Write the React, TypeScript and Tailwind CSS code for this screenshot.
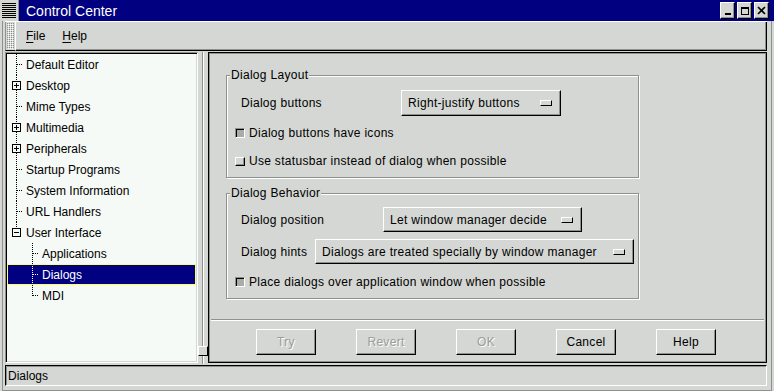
import React from 'react';

type Row = {
  label: string;
  kind: 'leaf' | 'plus' | 'minus';
  depth: 0 | 1;
  last?: boolean;
  selected?: boolean;
};

const rows: Row[] = [
  { label: 'Default Editor', kind: 'leaf', depth: 0 },
  { label: 'Desktop', kind: 'plus', depth: 0 },
  { label: 'Mime Types', kind: 'leaf', depth: 0 },
  { label: 'Multimedia', kind: 'plus', depth: 0 },
  { label: 'Peripherals', kind: 'plus', depth: 0 },
  { label: 'Startup Programs', kind: 'leaf', depth: 0 },
  { label: 'System Information', kind: 'leaf', depth: 0 },
  { label: 'URL Handlers', kind: 'leaf', depth: 0 },
  { label: 'User Interface', kind: 'minus', depth: 0, last: true },
  { label: 'Applications', kind: 'leaf', depth: 1 },
  { label: 'Dialogs', kind: 'leaf', depth: 1, selected: true },
  { label: 'MDI', kind: 'leaf', depth: 1, last: true },
];

function TreeGutter({ row }: { row: Row }) {
  const stroke = row.selected ? '#ffffff' : '#000000';
  const w = row.depth === 0 ? 19 : 35;
  const x = row.depth === 0 ? 9.5 : 25.5;
  if (row.kind === 'leaf') {
    return (
      <svg width={w} height={21} className="shrink-0" shapeRendering="crispEdges">
        <line x1={x} y1={0} x2={x} y2={row.last ? 11 : 21} stroke={stroke} strokeDasharray="1 1" />
        <line x1={x + 0.5} y1={10.5} x2={x + 5.5} y2={10.5} stroke={stroke} strokeDasharray="1 1" />
      </svg>
    );
  }
  return (
    <svg width={w} height={21} className="shrink-0" shapeRendering="crispEdges">
      <line x1={x} y1={0} x2={x} y2={6} stroke={stroke} strokeDasharray="1 1" />
      {!row.last && <line x1={x} y1={15} x2={x} y2={21} stroke={stroke} strokeDasharray="1 1" />}
      <rect x={x - 4} y={6.5} width={8} height={8} fill="#f6faf6" stroke="#000" />
      <line x1={x - 2.5} y1={10.5} x2={x + 2.5} y2={10.5} stroke="#000" />
      {row.kind === 'plus' && <line x1={x} y1={8} x2={x} y2={13} stroke="#000" />}
    </svg>
  );
}

function OptionMenu({ label, className }: { label: string; className: string }) {
  return (
    <div
      className={`flex items-center justify-between pl-[6px] pr-[8px] border border-t-white border-l-white border-r-black border-b-black shadow-[inset_-1px_-1px_0_#8e918d] ${className}`}
    >
      <span>{label}</span>
      <span className="w-[12px] h-[6px] border border-t-white border-l-white border-r-black border-b-black" />
    </div>
  );
}

function Check({ on, label, className }: { on: boolean; label: string; className: string }) {
  return (
    <div className={`flex items-center h-[16px] pl-[8px] ${className}`}>
      {on ? (
        <span className="w-[10px] h-[10px] border border-t-[#8e918d] border-l-[#8e918d] border-r-white border-b-white bg-[#a9aca8] shadow-[inset_1px_1px_0_#000]" />
      ) : (
        <span className="w-[10px] h-[9px] border border-t-white border-l-white border-r-black border-b-black shadow-[inset_-1px_-1px_0_#8e918d]" />
      )}
      <span className="ml-[4px]">{label}</span>
    </div>
  );
}

function PushButton({ label, disabled }: { label: string; disabled?: boolean }) {
  return (
    <div className="w-[60px] h-[26px] flex items-center justify-center border border-t-white border-l-white border-r-black border-b-black shadow-[inset_-1px_-1px_0_#8e918d]">
      <span className={disabled ? 'text-[#9a9d99] [text-shadow:1px_1px_0_#ffffff]' : ''}>{label}</span>
    </div>
  );
}

function TitleButton({ kind }: { kind: 'min' | 'max' | 'close' }) {
  return (
    <div className="w-[15px] h-[17px] border border-t-white border-l-white border-r-black border-b-black bg-[#d4d7d3] shadow-[inset_-1px_-1px_0_#8e918d]">
      <svg width={13} height={15} shapeRendering="crispEdges">
        {kind === 'min' && <rect x={4} y={10} width={6} height={2} fill="#000" />}
        {kind === 'max' && (
          <>
            <rect x={3.5} y={4.5} width={7} height={7} fill="none" stroke="#000" />
            <rect x={3} y={4} width={8} height={2} fill="#000" />
          </>
        )}
        {kind === 'close' && (
          <path d="M3 4 L10 11 M10 4 L3 11" stroke="#000" strokeWidth={1.6} shapeRendering="auto" />
        )}
      </svg>
    </div>
  );
}

export default function App() {
  return (
    <div className="w-[774px] h-[391px] bg-[#d4d7d3] flex flex-col overflow-hidden text-[12px] leading-[14px] text-black font-['Liberation_Sans',Arial,sans-serif]">
      {/* title bar */}
      <div className="h-[21px] flex items-stretch bg-[#000080] shrink-0">
        <div className="w-[19px] bg-[#d4d7d3] border-r border-[#8e918d]">
          <svg width={18} height={21} shapeRendering="crispEdges">
            {[3, 5, 7, 9, 11, 13, 15, 17].map((y) => (
              <line key={y} x1={2} y1={y + 0.5} x2={16} y2={y + 0.5} stroke="#000" />
            ))}
          </svg>
        </div>
        <div className="flex-1 pl-[7px] flex items-center text-white text-[14px] leading-[16px]">Control Center</div>
        <div className="flex items-start gap-[2px] pt-[2px] pr-[5px]">
          <TitleButton kind="min" />
          <TitleButton kind="max" />
          <TitleButton kind="close" />
        </div>
      </div>

      {/* client */}
      <div className="flex-1 flex flex-col ml-[2px] mr-[2px] pl-[2px] pr-[4px] pb-[3px] border-l border-r border-b border-[#8e918d]">
        {/* menu bar */}
        <div className="h-[30px] flex shrink-0 border-t border-white">
          <div className="w-[10px] border-l border-[#8e918d] border-b border-b-black">
            <svg width={9} height={28}>
              <defs>
                <pattern id="grip" width={2} height={2} patternUnits="userSpaceOnUse">
                  <rect x={0} y={0} width={1} height={1} fill="#ffffff" />
                  <rect x={1} y={1} width={1} height={1} fill="#8e918d" />
                </pattern>
              </defs>
              <rect x={1} y={1} width={7} height={26} fill="url(#grip)" />
            </svg>
          </div>
          <div className="flex-1 flex items-center gap-[17px] pl-[10px] border-l border-white border-r border-r-black border-b border-b-black shadow-[inset_-1px_-1px_0_#8e918d]">
            <span>
              <span className="underline underline-offset-2">F</span>ile
            </span>
            <span>
              <span className="underline underline-offset-2">H</span>elp
            </span>
          </div>
        </div>

        {/* main */}
        <div className="flex mt-[1px] h-[312px] shrink-0">
          {/* tree */}
          <div className="w-[193px] h-[311px] bg-[#f6faf6] border border-t-[#8e918d] border-l-[#8e918d] border-r-white border-b-white shadow-[inset_1px_1px_0_#000,inset_-1px_-1px_0_#d4d7d3] pt-[1px] pl-[1px]">
            {rows.map((r) => (
              <div
                key={r.label}
                className={
                  r.selected
                    ? 'h-[21px] w-[189px] flex items-center bg-[#000080] text-white outline outline-1 -outline-offset-1 outline-[#ffff66]'
                    : 'h-[21px] w-[189px] flex items-center'
                }
              >
                <TreeGutter row={r} />
                <span>{r.label}</span>
              </div>
            ))}
          </div>

          {/* paned gutter */}
          <div className="w-[10px] flex flex-col items-center">
            <div className="flex-1 flex">
              <div className="w-[1px] bg-[#8e918d]" />
              <div className="w-[1px] bg-white" />
            </div>
            <div className="w-[10px] h-[10px] border border-t-white border-l-white border-r-black border-b-black" />
            <div className="h-[8px] flex">
              <div className="w-[1px] bg-[#8e918d]" />
              <div className="w-[1px] bg-white" />
            </div>
          </div>

          {/* right panel */}
          <div className="flex-1 h-[311px] flex flex-col tracking-[0.3px] border border-black shadow-[inset_1px_1px_0_#8e918d,inset_-1px_-1px_0_#8e918d]">
            <div className="pl-[17px]">
              {/* Dialog Layout */}
              <div className="relative mt-[22px] w-[413px] h-[103px] border border-[#8e918d] shadow-[inset_1px_1px_0_#fff,1px_1px_0_#fff]">
                <span className="absolute -top-[8px] left-[3px] px-[1px] bg-[#d4d7d3]">Dialog Layout</span>
                <div className="mt-[14px] h-[26px] flex items-center pl-[14px]">
                  <span className="w-[160px]">Dialog buttons</span>
                  <OptionMenu label="Right-justify buttons" className="w-[160px] h-[26px]" />
                </div>
                <Check on label="Dialog buttons have icons" className="mt-[9px]" />
                <Check on={false} label="Use statusbar instead of dialog when possible" className="mt-[12px]" />
              </div>

              {/* Dialog Behavior */}
              <div className="relative mt-[15px] w-[413px] h-[106px] border border-[#8e918d] shadow-[inset_1px_1px_0_#fff,1px_1px_0_#fff]">
                <span className="absolute -top-[8px] left-[3px] px-[1px] bg-[#d4d7d3]">Dialog Behavior</span>
                <div className="mt-[13px] h-[25px] flex items-center pl-[14px]">
                  <span className="w-[142px]">Dialog position</span>
                  <OptionMenu label="Let window manager decide" className="w-[199px] h-[25px]" />
                </div>
                <div className="mt-[7px] h-[25px] flex items-center pl-[14px]">
                  <span className="w-[74px]">Dialog hints</span>
                  <OptionMenu label="Dialogs are treated specially by window manager" className="w-[319px] h-[25px]" />
                </div>
                <Check on label="Place dialogs over application window when possible" className="mt-[10px]" />
              </div>
            </div>

            <div className="mt-[20px] mx-[2px] h-[2px] border-t border-[#8e918d] border-b border-b-white" />
            <div className="mt-[8px] flex gap-[40px] pl-[47px]">
              <PushButton label="Try" disabled />
              <PushButton label="Revert" disabled />
              <PushButton label="OK" disabled />
              <PushButton label="Cancel" />
              <PushButton label="Help" />
            </div>
          </div>
        </div>

        {/* status bar */}
        <div className="mt-[1px] h-[21px] flex items-center pl-[2px] border border-t-[#000] border-l-[#000] border-r-white border-b-white shadow-[inset_1px_1px_0_#8e918d]">
          Dialogs
        </div>
      </div>
    </div>
  );
}
